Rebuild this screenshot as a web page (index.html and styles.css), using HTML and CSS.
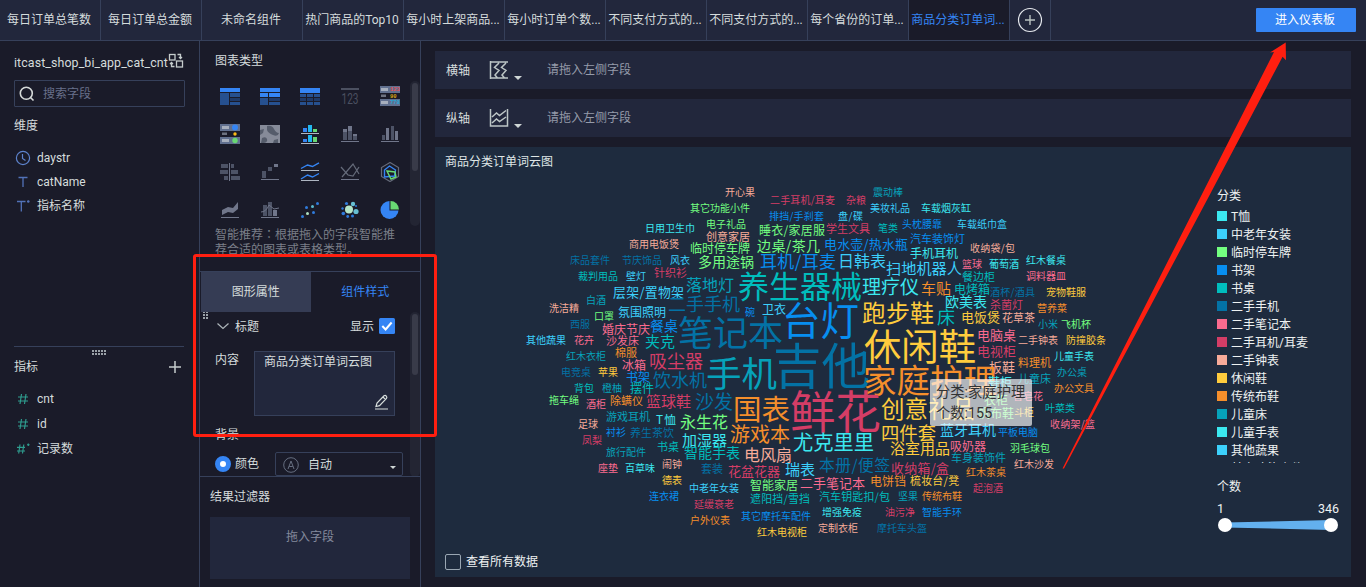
FILE: index.html
```html
<!DOCTYPE html>
<html lang="zh-CN">
<head>
<meta charset="utf-8">
<title>商品分类订单词云图</title>
<link rel="stylesheet" href="styles.css">
</head>
<body>
<div class="app">
  <header class="topbar">
    <div class="tab">每日订单总笔数</div>
    <div class="tab">每日订单总金额</div>
    <div class="tab">未命名组件</div>
    <div class="tab">热门商品的Top10</div>
    <div class="tab">每小时上架商品...</div>
    <div class="tab">每小时订单个数...</div>
    <div class="tab">不同支付方式的...</div>
    <div class="tab">不同支付方式的...</div>
    <div class="tab">每个省份的订单...</div>
    <div class="tab tab-active">商品分类订单词...</div>
    <div class="tab tab-add"><svg width="26" height="26" viewBox="0 0 26 26" fill="none" stroke="#e6e9ee"><circle cx="13" cy="13" r="11.5" stroke-width="1.2"/><path d="M13 8v10M8 13h10" stroke="#b9c2c0" stroke-width="1.4"/></svg></div>
    <button class="enter">进入仪表板</button>
  </header>
  <div class="body">
    <aside class="fields">
      <div class="table-name"><span>itcast_shop_bi_app_cat_cnt</span><svg width="16" height="16" viewBox="0 0 16 16" fill="none" stroke="#c5cccc" stroke-width="1.3"><rect x="1.5" y="1.5" width="5.5" height="5.5"/><rect x="8.500" y="8" width="6" height="6"/><path d="M9.500 1.500h3v4M11 4l1.500 1.500L14 4M6.500 13.500h-3v-4M2 11l1.500-1.500L5 11"/></svg></div>
      <div class="search"><svg width="16" height="16" viewBox="0 0 16 16" fill="none" stroke="#d5dad9" stroke-width="1.6"><circle cx="7.300" cy="7.300" r="6"/><path d="M11.500 11.500l3 3"/></svg><span>搜索字段</span></div>
      <h3 class="dim-title">维度</h3>
      <ul class="dims">
        <li><svg width="16" height="16" viewBox="0 0 16 16" fill="none" stroke="#5d83cc" stroke-width="1.2"><circle cx="8" cy="8" r="6.600"/><path d="M7.500 4v4.500l3 2"/></svg>daystr</li>
        <li><svg width="16" height="16" viewBox="0 0 16 16" fill="none" stroke="#5272b8" stroke-width="1.300"><path d="M3.500 3.500h9M8 3.500v9.500"/></svg>catName</li>
        <li><svg width="16" height="16" viewBox="0 0 16 16" fill="none" stroke="#5272b8" stroke-width="1.300"><path d="M2 3.500h8.500M6.300 3.500v10M12 3.500h2.600M13.300 2.200v2.600"/></svg>指标名称</li>
      </ul>
      <div class="split"><i class="grip"></i></div>
      <div class="metric-title"><span>指标</span><svg width="14" height="14" viewBox="0 0 14 14" stroke="#c5cccc" stroke-width="1.500"><path d="M7 1v12M1 7h12"/></svg></div>
      <ul class="metrics">
        <li><svg width="16" height="16" viewBox="0 0 16 16" fill="none" stroke="#2f9e90" stroke-width="1.150"><path d="M6.500 3l-1.500 10M11 3L9.500 13M3 6h10M3 10h10"/></svg>cnt</li>
        <li><svg width="16" height="16" viewBox="0 0 16 16" fill="none" stroke="#2f9e90" stroke-width="1.150"><path d="M6.500 3l-1.500 10M11 3L9.500 13M3 6h10M3 10h10"/></svg>id</li>
        <li><svg width="16" height="16" viewBox="0 0 16 16" fill="none" stroke="#2f9e90" stroke-width="1.150"><path d="M5 3.500L3.700 12.500M8.800 3.500L7.500 12.500M2 6.300h8M2 10h8M12 3.700h2.600M13.300 2.400V5"/></svg>记录数</li>
      </ul>
    </aside>

    <section class="config">
      <div class="chart-types">
        <h3>图表类型</h3>
        <div class="type-grid">
          <svg viewBox="0 0 20 20"><path fill="#3585f4" d="M0 2h20v4H0z"/><path fill="#26508f" d="M0 7h9v12H0zM10 7h10v4H10zM10 16h10v3H10z"/><path fill="#1f3a68" d="M10 12h10v3H10z"/></svg>
          <svg viewBox="0 0 20 20"><path fill="#3585f4" d="M0 2h20v4H0zM0 7h8v4H0zM9 7h11v4H9z"/><path fill="#26508f" d="M0 12h8v7H0zM9 16h11v3H9z"/><path fill="#1f3a68" d="M9 12h11v3H9z"/></svg>
          <svg viewBox="0 0 20 20"><path fill="#3585f4" d="M0 2h20v5H0z"/><path fill="#26508f" d="M0 8h6v3H0zM7 8h6v3H7zM14 8h6v3h-6zM0 16h6v3H0zM7 16h6v3H7zM14 16h6v3h-6z"/><path fill="#1f3a68" d="M0 12h6v3H0zM7 12h6v3H7zM14 12h6v3h-6z"/></svg>
          <svg viewBox="0 0 20 20"><path fill="#4b5060" d="M1 2h18v2H1z"/><text x="10" y="18" class="digits" textLength="17" lengthAdjust="spacingAndGlyphs">123</text></svg>
          <svg viewBox="0 0 20 20"><path fill="#61708f" d="M0 0h20v7H0zM0 13h20v7H0z"/><path fill="#a7afbd" d="M1 2h7v3H1zM1 15h7v3H1z"/><path fill="#6d7280" d="M1 8.500h5v2.500H1z"/><g class="tiny"><text x="10" y="5.300" fill="#e44d55">123</text><text x="10" y="11.500" fill="#d9a412">90</text><text x="10" y="18.300" fill="#24a8d8">778</text></g></svg>
          <svg viewBox="0 0 20 20"><path fill="#61708f" d="M0 0h20v7H0zM0 13h20v7H0z"/><path fill="#a7afbd" d="M2 2h7v3H2zM2 15h7v3H2z"/><path fill="#6d7280" d="M2 8.500h5v2.500H2z"/><circle cx="15" cy="3.500" r="3" fill="#3585f4"/><circle cx="15" cy="10" r="1.700" fill="#fdbb18"/><circle cx="15" cy="16.500" r="2.700" fill="#69d873"/></svg>
          <svg viewBox="0 0 20 20"><path fill="#868b99" d="M0 1h20v18H0z"/><path fill="#555c6b" d="M7 2q5-1 7 3t5 4q-1 4-6 2t-6-5zM0 6l4-1-1 4-3 2zM2 14q4-2 5 1t-3 4H1zM14 16l4-1v4h-5z"/></svg>
          <svg viewBox="0 0 20 20"><path fill="#3585f4" d="M3 4h4v4H3zM3 15h4v3H3z"/><path fill="#22b8ef" d="M8 1h4v7H8zM8 11h4v7H8z"/><path fill="#69d873" d="M13 5h4v3h-4zM13 13h4v5h-4z"/><path fill="#aeb6c1" d="M1 9h18v1H1zM1 19h18v1H1z"/></svg>
          <svg viewBox="0 0 20 20"><path fill="#70768a" d="M3 5h4v3H3zM8 2h4v5H8zM13 10h4v2h-4zM1 17h18v1H1z"/><path fill="#4d5366" d="M3 8h4v8H3zM8 7h4v9H8zM13 12h4v4h-4z"/></svg>
          <svg viewBox="0 0 20 20"><path fill="#70768a" d="M6 4h3v12H6zM15 7h3v9h-3zM1 17h18v1H1z"/><path fill="#4d5366" d="M2 11h3v5H2zM11 2h3v14h-3z"/></svg>
          <svg viewBox="0 0 20 20"><path fill="#4d5366" d="M1 2h7v4H1zM0 8h8v4H0zM4 14h4v4H4zM11 2h3v4h-3zM11 8h7v4h-7zM11 14h9v4h-9z"/><path fill="#70768a" d="M9 1h1v18H9z"/></svg>
          <svg viewBox="0 0 20 20"><path fill="#4d5366" d="M2 9h4v7H2zM8 5h4v4H8z"/><path fill="#70768a" d="M14 2h4v3h-4zM1 17h18v1H1z"/></svg>
          <svg viewBox="0 0 20 20"><path fill="none" stroke="#3585f4" stroke-width="1.400" d="M1 6.500L7.500 3l5 1.500L19 .8M1 17l6.500-4 5 2L19 11.500"/><path fill="#aeb6c1" d="M1 8h18v1H1zM1 18h18v1H1z"/></svg>
          <svg viewBox="0 0 20 20"><path fill="none" stroke="#656b7a" stroke-width="1.200" d="M1 5l7 8 5 1 6-9M2 15L13 2l6 10"/><path fill="#70768a" d="M1 17h18v1H1z"/></svg>
          <svg viewBox="0 0 20 20" fill="none"><path stroke="#656b7a" stroke-width="1.200" d="M10 .5l8.500 5v9L10 19.500l-8.500-5v-9z"/><path stroke="#3585f4" stroke-width="1.400" d="M9.500 4l6 4-1 6-10 1V8z"/><path stroke="#69d873" stroke-width="1.400" d="M7 9l8 1 1 5-5 2z"/></svg>
          <svg viewBox="0 0 20 20"><path fill="#70768a" d="M2 10l6-3 5 1 5-6v7l-5 4-5-1-6 3zM1 17h18v1H1z"/></svg>
          <svg viewBox="0 0 20 20"><path fill="#4d5366" d="M3 5h4v11H3zM8 2h4v14H8z"/><path fill="#70768a" d="M13 10h4v6h-4zM1 17h18v1H1z"/><path fill="none" stroke="#70768a" d="M1 12q5 0 8-7l5 4 5-1"/></svg>
          <svg viewBox="0 0 20 20"><g fill="#2f7bdc"><circle cx="2.500" cy="16.500" r="1.500"/><circle cx="6.500" cy="7.500" r="1.500"/><circle cx="13.500" cy="12.500" r="1.500"/><circle cx="17.500" cy="3.500" r="1.500"/></g><circle cx="7.500" cy="13.500" r="1.500" fill="#aee0c0"/><circle cx="12.500" cy="6.500" r="1.500" fill="#5abbcf"/></svg>
          <svg viewBox="0 0 20 20"><circle cx="9" cy="9.500" r="4" fill="#b5e6c8"/><g fill="#66bfd2"><circle cx="13" cy="4" r="2.200"/><circle cx="16" cy="11.500" r="2.600"/></g><g fill="#2f7bdc"><circle cx="6.500" cy="3.500" r="1.600"/><circle cx="2.500" cy="8.500" r="1.200"/><circle cx="3.300" cy="13.500" r="1.800"/><circle cx="7.700" cy="16.500" r="1.400"/><circle cx="12.500" cy="16" r="1.500"/><circle cx="16" cy="6" r="1"/></g></svg>
          <svg viewBox="0 0 20 20"><circle cx="9.500" cy="10" r="9" fill="#3585f4"/><path fill="#1a1b29" d="M9.500 0H20v10.500H9.500z"/><path fill="#69d873" d="M10.500 1a8.500 8.500 0 0 1 8.500 8.500h-8.500z"/></svg>
        </div>
        <p class="hint">智能推荐<span lang="zh-TW" class="colon">：</span>根据拖入的字段智能推荐合适的图表或表格类型。</p>
        <div class="track track-top"><i></i></div>
      </div>
      <div class="switch"><div class="on">图形属性</div><div class="off">组件样式</div></div>
      <div class="props">
        <i class="grip grip-v"></i>
        <div class="row title-row">
          <svg width="14" height="10" viewBox="0 0 14 10" fill="none" stroke="#aeb6ba" stroke-width="1.200"><path d="M1.500 2.500L7 7.500l5.500-5"/></svg>
          <span>标题</span><span class="show">显示</span>
          <svg width="16" height="16" viewBox="0 0 16 16"><rect width="16" height="16" rx="1.500" fill="#3585f4"/><path d="M3.300 8l3.300 3.500 6-7" fill="none" stroke="#fff" stroke-width="2"/></svg>
        </div>
        <div class="row content-row"><span>内容</span>
          <div class="area">商品分类订单词云图
            <svg width="15" height="16" viewBox="0 0 15 16" fill="none" stroke="#d8dfdd" stroke-width="1.200"><path d="M2 12.500L3 9l7-7.200q1.300-.8 2.300.3t.2 2.300l-7 7.200zM9 3l2.800 2.800M1 15h13"/></svg>
          </div>
        </div>
        <div class="bg-title">背景</div>
        <div class="row color-row"><i class="radio"></i><span>颜色</span>
          <div class="select"><svg width="16" height="16" viewBox="0 0 16 16" fill="none" stroke="#666e80"><circle cx="8" cy="8" r="7.300"/><path d="M5 12L8 4l3 8M6.200 9.500h3.600"/></svg><span>自动</span><i class="caret"></i></div>
        </div>
        <div class="track track-props"><i></i></div>
      </div>
      <div class="filter"><h3>结果过滤器</h3><div class="drop">拖入字段</div></div>
    </section>

    <main class="main">
      <div class="axis"><b>横轴</b><svg width="20" height="20" viewBox="0 0 20 20" fill="none" stroke="#bdc6c6" stroke-width="1.500"><path d="M1.500 1v18M1 2h18M1 18h18M10 3L5.500 7.500l4.500 3-4 4.500 2.500 3M17 3l-4.500 4.500 4.500 3-4 4.500 2.500 3"/></svg><i class="caret"></i><span>请拖入左侧字段</span></div>
      <div class="axis"><b>纵轴</b><svg width="20" height="20" viewBox="0 0 20 20" fill="none" stroke="#bdc6c6" stroke-width="1.500"><path d="M1.500 1v17h17V1M3 9l4.500-4 3 2.500L17 2.500M3 15l4.500-4 3 2.500L17 9"/></svg><i class="caret"></i><span>请拖入左侧字段</span></div>
      <div class="chart">
        <div class="plot">
          <h2>商品分类订单词云图</h2>
          <svg class="cloud" id="cloud" width="600" height="370" viewBox="510 175 600 370"></svg>
          <label class="all"><i></i>查看所有数据</label>
          <div class="tooltip"><div>分类:家庭护理</div><div>个数:155</div></div>
        </div>
        <div class="legend">
          <h4>分类</h4>
          <ul id="legend"></ul>
          <h4 class="count">个数</h4>
          <div class="range"><span>1</span><span>346</span></div>
          <svg width="122" height="16" viewBox="0 0 122 16"><path d="M8 5.500L114 3v10L8 10.500z" fill="#63b0ee"/><circle cx="8" cy="8" r="7" fill="#fff"/><circle cx="114" cy="8" r="7" fill="#fff"/></svg>
        </div>
      </div>
    </main>
  </div>
  <div class="mark-box"></div>
  <svg class="mark-arrow" width="1366" height="587" viewBox="0 0 1366 587"><path fill="#ff1f10" d="M1285.700 42.500L1270 52.500l4-.5L1199 200 1062.500 468.500 1064 468.500 1207 200 1282.600 56.700l3.400 3.500z"/></svg>
</div>
<script src="app.js"></script>
</body>
</html>
```
FILE: styles.css
```css
* { box-sizing: border-box; }
body, h2, h3, h4, p, ul { margin: 0; padding: 0; }
ul { list-style: none; }
body { background: #1a1b29; color: #d5dcdc; font: 12px/16px Roboto, "Noto Sans CJK SC", sans-serif; overflow: hidden; }
h2, h3, h4, b { font-size: 12px; font-weight: 400; }
svg { display: block; flex: none; }
.app { width: 1366px; height: 587px; display: flex; flex-direction: column; position: relative; overflow: hidden; }

.topbar { height: 41px; flex: none; display: flex; background: #22273c; border-bottom: 1px solid #36405a; }
.tab { width: 101px; flex: none; border-right: 1px solid #36405a; line-height: 41px; height: 40px; padding-right: 2px; text-align: center; white-space: nowrap; overflow: hidden; }
.tab-active { background: #1a1b29; color: #3585f4; }
.tab-add { width: 41px; padding: 0; display: flex; align-items: center; justify-content: center; }
.enter { margin: 8px 10px 0 auto; width: 100px; height: 24px; border: 0; border-radius: 1px; padding: 0 2px 0 0; background: #3585f4; color: #fff; font: inherit; }

.body { flex: 1; display: flex; min-height: 0; }
.fields { width: 200px; flex: none; border-right: 1px solid #36405a; padding: 12px 14px 0; }
.table-name { display: flex; height: 18px; font-size: 12.4px; letter-spacing: 0.1px; line-height: 20px; white-space: nowrap; }
.table-name span { width: 154px; }
.search { margin-top: 9px; height: 27px; width: 171px; border: 1px solid #36405a; border-radius: 1px; display: flex; align-items: center; gap: 8px; padding: 1px 4px; color: #68708a; }
.dim-title { margin-top: 11px; }
.dims { margin-top: 12px; }
.dims li, .metrics li { display: flex; align-items: center; gap: 6px; height: 24px; padding-left: 1px; }
.split { margin-top: 128px; border-top: 1px solid #36405a; height: 12px; width: 170px; display: flex; justify-content: center; padding-top: 3px; }
.grip { width: 14px; height: 5px; background: radial-gradient(circle at 1px 1px, #9ba2a8 0.9px, transparent 1.1px) 0 0 / 3px 3px; }
.metric-title { display: flex; justify-content: space-between; align-items: center; margin-right: 3px; height: 18px; }
.metrics { margin-top: 10px; }
.metrics li { height: 25px; }

.config { width: 221px; flex: none; border-right: 1px solid #36405a; display: flex; flex-direction: column; }
.chart-types { height: 231px; flex: none; padding: 12px 0 0 15px; border-bottom: 1px solid #36405a; position: relative; }
.type-grid { margin: 17px 0 0 5px; display: grid; grid-template-columns: repeat(5, 40px); grid-auto-rows: 38px; }
.type-grid svg { width: 20px; height: 20px; }
.digits { font: 15px Roboto, sans-serif; fill: #4b5060; text-anchor: middle; }
.tiny { font: bold 5.5px "Liberation Mono", monospace; }
.hint { width: 182px; height: 31px; overflow: hidden; margin-top: -12px; color: #7a7f88; line-height: 15px; padding-top: 2px; }
.colon { font-family: "Noto Sans CJK TC", sans-serif; line-height: 1; }
.track { position: absolute; background: #232533; border-radius: 5px; width: 10px; padding: 2px; }
.track i { display: block; background: #393b49; border-radius: 3px; }
.track-top { left: 210px; top: 40px; height: 145px; }
.track-top i { height: 88px; }
.switch { display: flex; height: 40px; flex: none; padding-left: 1px; line-height: 41px; text-align: center; }
.on { width: 110px; background: #353c54; }
.off { width: 110px; color: #3585f4; }
.props { height: 165px; flex: none; overflow: hidden; position: relative; border-bottom: 1px solid #36405a; padding: 4px 15px 0; }
.row { display: flex; }
.title-row { height: 20px; align-items: center; padding-left: 1px; gap: 5px; width: 180px; }
.title-row span { position: relative; top: 1px; }
.title-row .show { margin-left: auto; }
.content-row { margin-top: 15px; gap: 15px; }
.content-row > span { padding-top: 1px; }
.area { width: 141px; height: 65px; border: 1px solid #36405a; background: #22273c; padding: 2px 9px; position: relative; white-space: nowrap; }
.area svg { position: absolute; right: 5px; bottom: 5px; }
.bg-title { margin-top: 11px; height: 16px; }
.color-row { margin-top: 9px; align-items: center; gap: 4px; }
.radio { width: 16px; height: 16px; border-radius: 50%; border: 5px solid #3585f4; background: #fff; }
.select { margin-left: 12px; width: 128px; height: 24px; flex: none; border: 1px solid #36405a; border-radius: 2px; display: flex; align-items: center; padding: 1px 6px 0 7px; gap: 9px; }
.caret { width: 0; height: 0; border: 4px solid transparent; border-width: 4px 4px 0; border-top-color: #cfd6d5; }
.select .caret { margin-left: auto; margin-top: 5px; border-width: 3px 3px 0; }
.track-props { right: 0; top: 0; height: 165px; width: 10px; }
.track-props i { height: 61px; }
.grip-v { position: absolute; left: 3px; top: -4px; width: 5px; height: 12px; z-index: 2; }
.filter { flex: 1; padding: 12px 10px 8px 10px; display: flex; flex-direction: column; }
.drop { margin-top: 12px; height: 62px; width: 200px; background: #22273c; color: #848a9c; text-align: center; padding-top: 12px; }

.main { flex: 1; padding: 10px 15px 10px 14px; display: flex; flex-direction: column; gap: 10px; }
.axis { height: 38px; flex: none; background: #22273c; display: flex; align-items: center; padding: 0 0 0 11px; }
.axis b { padding-top: 1px; }
.axis svg { margin: 0 0 0 19px; }
.axis .caret { margin: 16px 0 0 5px; }
.axis span { margin-left: 25px; color: #959baa; }
.chart { height: 430px; background: #1e2b3e; display: flex; color: #eef2f2; }
.plot { width: 782px; position: relative; padding: 7px 10px; }
.plot h2 { height: 21px; color: #dfe6e6; }
.cloud { margin-left: 65px; }
.cloud text { font-family: "Noto Sans CJK SC", sans-serif; }
.all { display: flex; align-items: center; gap: 5px; margin-top: 9px; }
.all i { width: 16px; height: 16px; border: 1px solid #9aa7b3; border-radius: 2px; }
.tooltip { position: absolute; left: 495px; top: 232px; width: 102px; height: 47px; border-radius: 2px; background: rgba(255, 255, 255, 0.65); color: #333; font-size: 14.3px; line-height: 21px; padding: 3px 6px; white-space: nowrap; }
.legend { width: 134px; padding-top: 41px; }
.legend ul { height: 256px; margin-top: 3px; overflow: hidden; }
.legend li { height: 18px; display: flex; align-items: center; gap: 4px; padding-top: 1px; }
.legend li i { width: 10px; height: 10px; margin-top: -1px; }
.legend .count { margin-top: 16px; }
.range { display: flex; justify-content: space-between; width: 122px; margin-top: 6px; line-height: 16px; font-size: 12.5px; }
.mark-box { position: absolute; left: 193px; top: 254px; width: 244px; height: 183px; border: 3px solid #ff1f10; border-radius: 3px; z-index: 3; }
.mark-arrow { position: absolute; left: 0; top: 0; pointer-events: none; }
```
FILE: app.js
```js
const palette = {
  C: '#3be8f0', S: '#3cd0fc', G: '#73ff80', B: '#078ef0', T: '#00bdbd', D: '#0372a5',
  P: '#fb6b8f', R: '#d43d66', A: '#f7ab99', Y: '#ffcc3d', O: '#f58e2b', K: '#06a2ba'
};

// word, left, right, vertical centre, colour key
const words = `开心果 725 755 191.5 A
二手耳机/耳麦 770 835 199.5 R
杂粮 846 866 199.5 R
震动棒 873 903 191.5 K
其它功能小件 690 750 207.5 G
排挡/手刹套 769 824 215.5 B
盘/碟 838 863 215.5 S
美妆礼品 870 910 207.5 S
车载烟灰缸 921 971 207.5 C
日用卫生巾 645 695 227.5 C
电子礼品 706 746 223.5 G
睡衣/家居服 759 825 230.5 G
学生文具 826 870 229 R
笔类 878 898 227.5 T
头枕腰靠 902 942 223.5 B
车载纸巾盒 957 1007 223.5 S
创意家居 706 750 237 A
商用电饭煲 629 679 243.5 A
临时停车牌 690 750 248.5 G
边桌/茶几 757 820 245.5 G
电水壶/热水瓶 824 908 243.5 B
汽车装饰灯 910 965 239 B
收纳袋/包 970 1015 247.5 A
床品套件 570 610 259.5 D
节庆饰品 622 662 259.5 D
风衣 670 690 259.5 S
多用途锅 698 754 261.5 G
耳机/耳麦 760 836 262 B
日韩表 838 886 261 S
手机耳机 910 958 253.5 C
扫地机器人 886 962 268 S
篮球 962 982 263.5 P
葡萄酒 989 1019 263.5 C
红木餐桌 1026 1066 259.5 C
裁判用品 578 618 275.5 T
壁灯 626 646 275.5 S
针织衫 654 687 273 R
落地灯 686 734 285 K
养生器械 738 862 287 T
理疗仪 862 919 286.5 C
车贴 921 951 288 O
餐边柜 962 995 277 T
调料器皿 1026 1066 275.5 P
电烤箱 954 990 289.5 T
酒杯/酒具 990 1035 291.5 D
宠物鞋服 1046 1086 291.5 Y
层架/置物架 613 684 291.5 S
欧美表 945 987 301.5 C
杀菌灯 990 1023 305 R
营养菜 1037 1067 307.5 O
白酒 586 606 299.5 K
洗洁精 549 579 307.5 A
口罩 594 614 315.5 G
氛围照明 618 666 312.5 S
二手手机 668 740 304.5 D
碗 745 755 311.5 B
卫衣 762 786 309 S
台灯 782 859 321 B
跑步鞋 862 934 313 Y
床 937 955 317 T
电饭煲 961 1000 317 Y
花草茶 1002 1035 317.5 A
小米 1038 1058 323.5 K
飞机杯 1061 1091 323.5 G
西服 570 590 323.5 D
婚庆节庆 602 650 329.5 P
餐桌 650 678 325.5 B
笔记本 678 783 333 D
其他蔬果 526 566 339.5 S
花卉 574 594 339.5 P
沙发床 606 639 341 P
夹克 645 675 341.5 T
休闲鞋 864 976 347 Y
电脑桌 977 1016 335.5 P
二手钟表 1018 1058 339.5 A
防撞胶条 1066 1106 339.5 Y
电视柜 977 1016 351.5 R
儿童手表 1054 1094 355.5 C
红木衣柜 566 606 355.5 K
棉服 615 637 353 O
吸尘器 649 703 361 R
吉他 773 870 366 D
冰箱 622 646 365.5 P
电竞桌 561 591 371.5 D
苹果 598 618 371.5 Y
书架 626 650 377.5 B
饮水机 653 707 380.5 D
手机 706 777 374 K
背包 574 594 387.5 T
橙柚 602 622 387.5 K
摆件 630 654 388 T
拖车绳 549 579 399.5 G
酒柜 586 606 403.5 P
除螨仪 610 643 401 O
篮球鞋 646 691 401 R
沙发 695 733 402 D
国表 733 790 409 O
足球 578 598 423.5 A
游戏耳机 606 650 417 K
T恤 656 676 419 C
永生花 680 728 422 G
衬衫 606 626 431.5 B
养生茶饮 630 674 433 D
加湿器 682 727 440 C
游戏本 730 790 435 O
凤梨 582 602 439.5 R
书桌 657 679 447 T
智能手表 684 740 453 T
电风扇 744 792 455 A
旅行配件 606 646 451.5 K
闹钟 662 682 463.5 A
座垫 598 618 467.5 P
百草味 625 655 467.5 C
套装 701 723 469 D
花盆花器 728 780 471 R
瑞表 785 815 469.5 S
德表 662 682 479.5 Y
中老年女装 689 739 487.5 S
智能家居 750 798 485.5 G
连衣裙 649 679 495.5 B
二手笔记本 800 865 483 P
延缓衰老 694 734 503.5 R
遮阳挡/雪挡 750 810 499 T
户外仪表 690 730 519.5 O
其它摩托车配件 741 811 515.5 B
红木电视柜 757 807 531.5 Y
板鞋 989 1015 367.5 A
料理机 1018 1051 363 O
办公桌 1057 1087 371.5 K
儿童床 1018 1051 379 K
家庭护理 863 997 381 O
鞋柜 988 1012 382.5 C
办公文具 1054 1094 387.5 O
香皂花 1013 1043 395.5 P
衣柜 984 1008 400 G
鲜花 790 881 412 R
创意礼品 881 975 409 Y
帆布鞋 978 1014 413.5 G
斗柜 1014 1034 411.5 Y
叶菜类 1045 1075 407.5 T
收纳架/篮 1050 1095 423.5 P
四件套 881 936 433 Y
蓝牙耳机 940 996 429.5 S
平板电脑 998 1038 431.5 B
尤克里里 793 874 443 C
浴室用品 890 950 448.5 Y
吸奶器 950 986 446 P
羽毛球包 1010 1050 447.5 G
车身装饰件 951 1006 457.5 K
红木沙发 1014 1054 463.5 A
本册/便签 819 890 465 D
收纳箱/盒 891 949 467.5 R
红木茶桌 966 1006 471.5 O
电饼铛 870 906 481.5 O
梳妆台/凳 910 959 481 Y
起泡酒 973 1003 487.5 R
汽车钥匙扣/包 819 890 497 T
坚果 898 918 495.5 K
传统布鞋 922 962 495.5 O
增强免疫 822 862 512 C
油污净 885 915 511.5 R
智能手环 922 962 511.5 B
定制衣柜 818 858 527.5 A
摩托车头盔 877 927 527.5 D`;

const cloud = document.getElementById('cloud');
for (const line of words.split('\n')) {
  const [word, left, right, middle, key] = line.split(' ');
  const units = [...word].reduce((n, ch) => n + (ch === '/' ? 0.5 : ch === 'T' ? 0.7 : 1), 0);
  const size = (right - left) / units;
  const el = document.createElementNS('http://www.w3.org/2000/svg', 'text');
  el.textContent = word;
  el.setAttribute('x', left);
  el.setAttribute('y', +middle + size * 0.37 + (size < 13 ? 0.3 : 0));
  el.setAttribute('font-size', size);
  el.setAttribute('textLength', right - left);
  el.setAttribute('fill', palette[key]);
  cloud.appendChild(el);
}

const legend = [
  ['T恤', 'C'], ['中老年女装', 'S'], ['临时停车牌', 'G'], ['书架', 'B'], ['书桌', 'T'],
  ['二手手机', 'D'], ['二手笔记本', 'P'], ['二手耳机/耳麦', 'R'], ['二手钟表', 'A'],
  ['休闲鞋', 'Y'], ['传统布鞋', 'O'], ['儿童床', 'K'], ['儿童手表', 'C'], ['其他蔬果', 'S'],
  ['其它功能小件', 'G']
];
const list = document.getElementById('legend');
for (const [name, key] of legend) {
  const item = document.createElement('li');
  const swatch = document.createElement('i');
  swatch.style.background = palette[key];
  item.append(swatch, name);
  list.appendChild(item);
}
```
